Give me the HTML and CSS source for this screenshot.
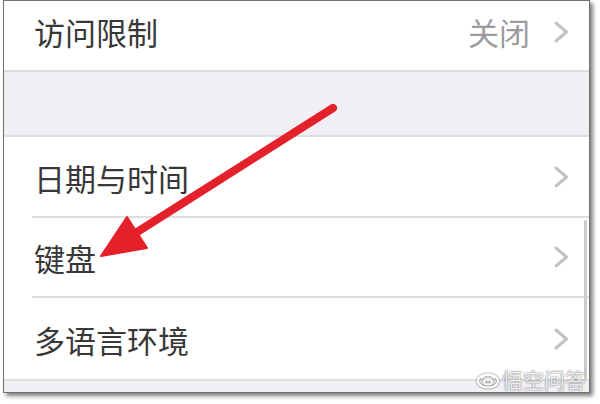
FILE: index.html
```html
<!DOCTYPE html>
<html lang="zh-CN">
<head>
    <meta charset="UTF-8">
    <meta name="viewport" content="width=device-width, initial-scale=1.0">
    <title>通用设置</title>
    <link rel="stylesheet" href="styles.css">
</head>
<body>
    <div class="page">
        <div class="frame">
            <div class="cell cell-first">
                <span class="cell-title">访问限制</span>
                <span class="cell-value">关闭</span>
                <svg class="chevron" viewBox="0 0 15 22"><polyline points="2,2 12.5,11 2,20"/></svg>
            </div>
            <div class="group-gap"></div>
            <div class="cell cell-inset cell-date">
                <span class="cell-title">日期与时间</span>
                <svg class="chevron" viewBox="0 0 15 22"><polyline points="2,2 12.5,11 2,20"/></svg>
            </div>
            <div class="cell cell-inset">
                <span class="cell-title">键盘</span>
                <svg class="chevron" viewBox="0 0 15 22"><polyline points="2,2 12.5,11 2,20"/></svg>
            </div>
            <div class="cell cell-last">
                <span class="cell-title">多语言环境</span>
                <svg class="chevron" viewBox="0 0 15 22"><polyline points="2,2 12.5,11 2,20"/></svg>
            </div>
            <div class="group-gap group-gap-end"></div>
            <div class="scrollbar"></div>
        </div>

        <!-- annotation arrow drawn over the screenshot -->
        <svg class="arrow" viewBox="0 0 600 404">
            <line x1="333" y1="108" x2="134" y2="234"/>
            <polygon points="101,256 127,217 147,248"/>
        </svg>

        <div class="watermark">
            <svg class="watermark-logo" viewBox="0 0 24 20">
                <ellipse cx="12" cy="11" rx="10" ry="6.5"/>
                <path d="M5 8 Q12 1 19 8"/>
                <ellipse cx="12" cy="12" rx="4" ry="2.5"/>
            </svg>
            <span>悟空问答</span>
        </div>
    </div>
</body>
</html>
```

FILE: styles.css
```css
body {
    margin: 0;
    background: #fff;
    font-family: "Noto Sans CJK SC", "Noto Sans", sans-serif;
}

.page {
    position: relative;
    width: 600px;
    height: 404px;
    overflow: hidden;
}

.frame {
    position: relative;
    box-sizing: border-box;
    width: 587px;
    height: 393px;
    margin-left: 3px;
    border: 1px solid #707070;
    background: #fff;
    box-shadow: 3px 3px 4px rgba(0, 0, 0, 0.5);
    display: flex;
    flex-direction: column;
}

.cell {
    box-sizing: border-box;
    display: flex;
    align-items: center;
    padding-left: 30px;
    padding-right: 20px;
    background: #fff;
    color: #383838;
    font-size: 31px;
    line-height: 1;
}

.cell-title {
    flex: 1;
}

.cell-value {
    color: #9c9ca0;
    margin-right: 24px;
}

.chevron {
    width: 15px;
    height: 22px;
    fill: none;
    stroke: #c2c2c6;
    stroke-width: 3;
    stroke-linecap: round;
    stroke-linejoin: round;
}

.cell-first {
    height: 71px;
    padding-bottom: 8px;
    border-bottom: 2px solid #dedee2;
}

.group-gap {
    height: 65px;
    background: #efeff4;
    border-bottom: 2px solid #dedee2;
    box-sizing: border-box;
}

.cell-inset {
    height: 81px;
    border-bottom: 2px solid transparent;
    background-image: linear-gradient(#dedee2, #dedee2);
    background-repeat: no-repeat;
    background-position: 28px 100%;
    background-size: 100% 2px;
    background-origin: border-box;
}

.cell-inset + .cell-inset {
    height: 80px;
}

.cell-date {
    padding-top: 1px;
}

.cell-last {
    height: 83px;
    padding-top: 1px;
    border-bottom: 2px solid #dedee2;
}

.group-gap-end {
    height: 11px;
    border-bottom: none;
}

.scrollbar {
    position: absolute;
    left: 580px;
    top: 219px;
    width: 3px;
    height: 160px;
    background: #cbcbcf;
    border-radius: 2px;
}

.arrow {
    position: absolute;
    left: 0;
    top: 0;
    width: 600px;
    height: 404px;
}

.arrow line {
    stroke: #e4202b;
    stroke-width: 8;
    stroke-linecap: round;
}

.arrow polygon {
    fill: #e4202b;
    stroke: #e4202b;
    stroke-width: 2;
    stroke-linejoin: round;
}

.watermark {
    position: absolute;
    left: 476px;
    top: 369px;
    display: flex;
    align-items: center;
    gap: 2px;
    color: rgba(255, 255, 255, 0.9);
    font-size: 21px;
    line-height: 1;
    text-shadow: 0 0 2px rgba(0, 0, 0, 0.45), 0 0 1px rgba(0, 0, 0, 0.4);
}

.watermark-logo {
    width: 24px;
    height: 20px;
    fill: none;
    stroke: #fff;
    stroke-width: 2;
    filter: drop-shadow(0 0 1px rgba(0, 0, 0, 0.6));
}
```
